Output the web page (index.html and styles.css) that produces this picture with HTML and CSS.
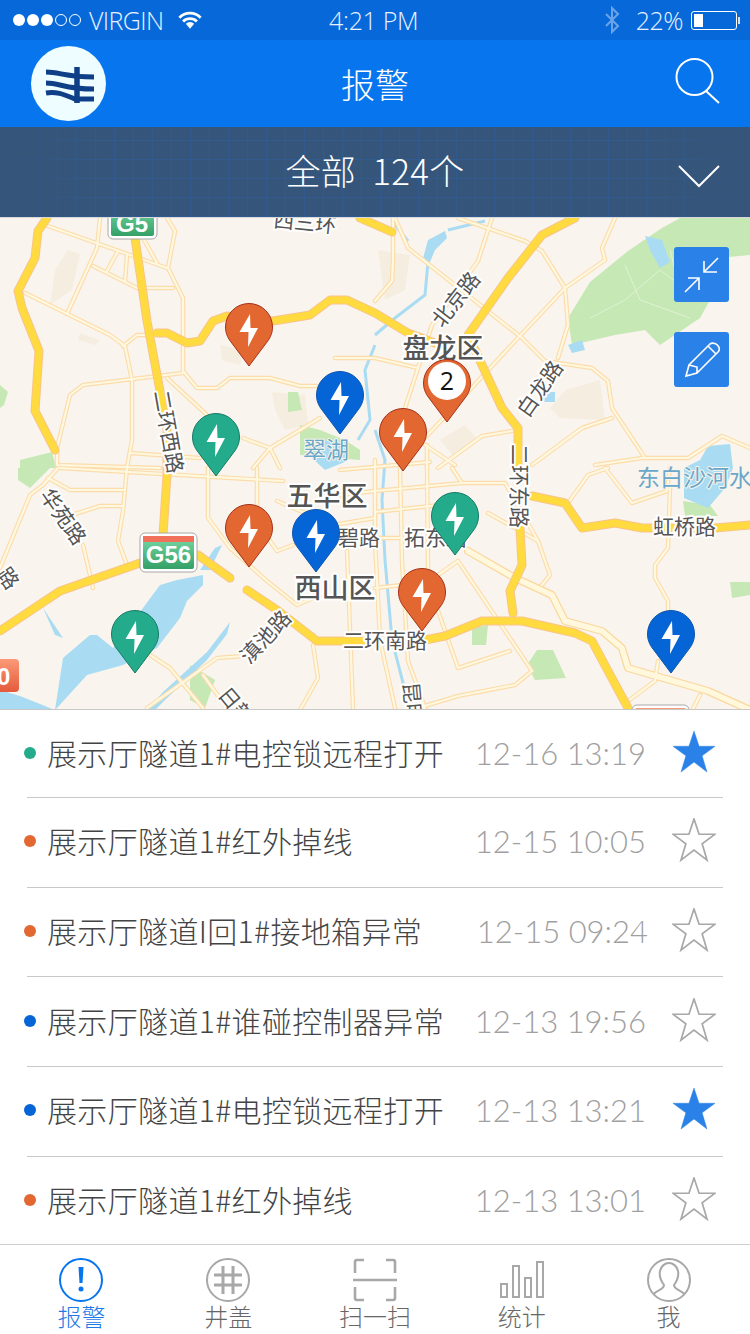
FILE: index.html
```html
<!DOCTYPE html>
<html lang="zh">
<head>
    <meta charset="UTF-8">
    <meta name="viewport" content="width=device-width, initial-scale=1.0">
    <title>报警</title>
    <link rel="stylesheet" href="styles.css">
</head>
<body>

<div class="phone">

    <!-- status bar -->
    <div class="status-bar">
        <div class="status-left">
            <span class="signal">
                <i class="dot-on"></i><i class="dot-on"></i><i class="dot-on"></i><i class="dot-off"></i><i class="dot-off"></i>
            </span>
            <span class="carrier">VIRGIN</span>
            <svg class="wifi" width="24" height="19" viewBox="0 0 26 20">
                <path d="M1.5 7 A16 16 0 0 1 24.5 7" />
                <path d="M5.5 11 A10.5 10.5 0 0 1 20.500 11" />
                <path class="wifi-tip" d="M8.500 13.500 A6.500 6.500 0 0 1 17.500 13.500 L13 19 Z" />
            </svg>
        </div>
        <div class="status-time">4:21 PM</div>
        <div class="status-right">
            <svg class="bluetooth" width="16" height="28" viewBox="0 0 16 28">
                <path d="M2 8 L14 20 L8 26 V2 L14 8 L2 20" />
            </svg>
            <span class="battery-text">22%</span>
            <span class="battery"><span class="battery-level"></span></span>
        </div>
    </div>

    <!-- nav -->
    <div class="nav-bar">
        <div class="logo">
            <svg width="50" height="38" viewBox="0 0 50 38">
                <path class="logo-wave" d="M1 6 C15 6 20 11 49 11" />
                <path class="logo-wave" d="M1 17 C15 17 20 23 49 23" />
                <path class="logo-wave" d="M1 27 C12 25 20 29 30 33 H49" />
                <path class="logo-stem" d="M32 1 V37" />
            </svg>
        </div>
        <div class="nav-title">报警</div>
        <svg class="search-icon" width="46" height="46" viewBox="0 0 46 46">
            <circle cx="19.500" cy="19" r="18" />
            <path d="M31 33 L44 45" />
        </svg>
    </div>

    <!-- filter -->
    <div class="filter-bar">
        <span class="filter-text">全部&nbsp;&nbsp;124个</span>
        <svg class="chevron" width="42" height="24" viewBox="0 0 42 24">
            <path d="M1 2 L21 22 L41 2" />
        </svg>
    </div>

    <!-- map: drawn in screen coordinates -->
    <div class="map">
        <svg class="map-canvas" width="750" height="492" viewBox="0 218 750 492">
            <defs>
                <linearGradient id="shieldGreen" x1="0" y1="0" x2="0" y2="1">
                    <stop offset="0" stop-color="#79d8a6" />
                    <stop offset="1" stop-color="#34a066" />
                </linearGradient>
                <linearGradient id="shieldRed" x1="0" y1="0" x2="0" y2="1">
                    <stop offset="0" stop-color="#fb9a78" />
                    <stop offset="1" stop-color="#e45a3c" />
                </linearGradient>

                <g id="minorRoads">
                    <path d="M48 226 L167 268" />
                    <path d="M100 218 L97 248 L67 314" />
                    <path d="M93 266 L137 288 L173 288" />
                    <path d="M118 251 L107 271" />
                    <path d="M127 255 L125 281" />
                    <path d="M143 238 L157 263" />
                    <path d="M167 218 L175 231 L168 268 L183 298 L183 371 L197 388 L217 388 L230 378 L270 378 L300 386 L317 386" />
                    <path d="M25 293 L110 335 L125 346 L132 380" />
                    <path d="M123 346 L137 335 L147 335" />
                    <path d="M57 448 L70 395 L83 385 L183 373" />
                    <path d="M132 380 L132 440 L127 468 L123 511 L118 541 L127 565" />
                    <path d="M167 378 L207 415" />
                    <path d="M243 438 L270 448 L280 468" />
                    <path d="M253 468 L270 448 L320 418" />
                    <path d="M57 450 L57 465 L160 468" />
                    <path d="M130 453 L200 458" />
                    <path d="M408 248 L522 338 L545 361 L592 368 L608 381 L612 408 L645 458" />
                    <path d="M458 218 L525 241 L542 251 L565 288 L568 325 L558 358" />
                    <path d="M395 218 L408 248" />
                    <path d="M615 218 L602 248 L605 260 L565 288 L518 338 L425 438" />
                    <path d="M492 218 L478 261 L432 325 L405 408" />
                    <path d="M393 218 L393 261 L392 281 L375 301" />
                    <path d="M335 358 L375 358 L418 368" />
                    <path d="M425 445 L455 465" />
                    <path d="M438 468 L482 436 L512 431" />
                    <path d="M532 465 L582 428 L612 418" />
                    <path d="M595 465 L642 458 L688 458 L722 436 L750 448" />
                    <path d="M452 468 L462 483 L375 491 L340 495" />
                    <path d="M462 483 L505 483 L538 541 L550 575 L542 585" />
                    <path d="M488 513 L538 541" />
                    <path d="M568 503 L588 475 L608 468" />
                    <path d="M605 468 L632 503 L667 491 L670 468" />
                    <path d="M670 488 L668 548 L655 565 L655 578 L668 601 L668 611" />
                    <path d="M658 661 L655 681 L628 701" />
                    <path d="M700 695 L692 711" />
                    <path d="M400 440 L400 468 L402 561 L408 661 L425 708" />
                    <path d="M427 445 L427 468 L428 568" />
                    <path d="M375 538 L402 538" />
                    <path d="M375 588 L402 585 L438 575 L458 561" />
                    <path d="M458 561 L532 671 L515 685 L458 696 L418 708" />
                    <path d="M438 611 L458 668 L510 651" />
                    <path d="M43 485 L30 495 L0 568" />
                    <path d="M58 468 L43 485" />
                    <path d="M48 478 L70 490 L123 490" />
                    <path d="M72 515 L100 506 L123 506" />
                    <path d="M60 468 L283 481" />
                    <path d="M208 468 L208 518 L230 548 L267 581 L297 605 L313 598" />
                    <path d="M257 468 L257 511 L270 541 L277 551 L293 545" />
                    <path d="M83 545 L93 588" />
                    <path d="M150 655 L170 668 L203 708" />
                    <path d="M147 708 L217 658 L243 656" />
                    <path d="M203 675 L227 708" />
                    <path d="M313 645 L318 678 L300 710" />
                    <path d="M347 551 L353 708" />
                    <path d="M277 501 L333 525 L375 518" />
                    <path d="M375 460 L375 540 L380 640 L395 708" />
                    <path d="M340 470 L430 462" />
                    <path d="M375 512 L440 505" />
                </g>

                <g id="majorRoad">
                    <path d="M468 551 L515 578 L552 595 L565 621 L602 631 L622 648 L628 668 L708 691 L750 710" />
                </g>

                <g id="highways">
                    <path d="M47 218 L38 231 L35 258 L18 291 L22 308 L39 351 L35 411 L55 450" />
                    <path d="M135 238 L147 321 L160 391 L167 430 L167 475 L163 535" />
                    <path d="M157 333 L167 333 L187 343 L200 341 L213 321 L227 316 L273 321 L310 315 L330 300 L347 300 L375 313 L408 333 L440 345" />
                    <path d="M575 218 L542 235 L508 278 L468 335 L482 365 L502 408 L518 428 L518 465" />
                    <path d="M360 218 L392 232" />
                    <path d="M520 528 L522 565 L510 591 L513 613" />
                    <path d="M532 496 L565 503 L582 528 L615 523 L642 528 L715 528 L750 525" />
                    <path d="M425 640 L445 636 L482 621 L522 621 L575 633 L592 641 L608 671 L628 708" />
                    <path d="M247 590 L277 610 L317 641 L363 641" />
                    <path d="M0 631 L60 591 L140 563" />
                    <path d="M198 555 L230 578" />
                </g>

                <symbol id="pin" width="48" height="64" viewBox="0 0 48 64">
                    <path d="M24 63 L6 39 C2 34 .5 29 .5 24 A23.500 23.500 0 1 1 47.500 24 C47.500 29 46 34 42 39 Z" />
                </symbol>
                <symbol id="bolt" width="48" height="64" viewBox="0 0 48 64">
                    <path class="pin-bolt" d="M25 11 L14.500 29 H23.500 L23 44 L33 25 H25.500 Z" />
                </symbol>
            </defs>

            <rect class="map-land" x="0" y="218" width="750" height="492" />

            <!-- blocks -->
            <path class="block" d="M68 250 L80 254 L72 290 L50 305 L55 270 Z" />
            <path class="block" d="M80 333 L100 340 L95 345 L78 340 Z" />
            <path class="block" d="M220 345 L245 350 L240 365 L222 360 Z" />
            <path class="block" d="M272 392 L305 395 L308 425 L285 430 L275 410 Z" />
            <path class="block" d="M378 250 L410 255 L405 290 L385 300 Z" />
            <path class="block" d="M440 440 L465 425 L478 440 L455 458 Z" />
            <path class="block" d="M566 390 L600 380 L605 420 L560 418 L550 408 Z" />

            <!-- parks -->
            <path class="park" d="M568 318 L590 282 L628 251 L662 228 L680 218 L750 218 L750 255 L718 258 L710 300 L700 318 L660 345 L645 330 L615 335 L572 345 Z" />
            <path class="park-path" d="M590 318 L625 300 L660 270 L700 300 M625 265 L640 300 L690 318 M670 250 L680 290" />
            <path class="park" d="M0 385 L8 392 L4 405 L0 408 Z" />
            <path class="park" d="M20 460 L52 452 L56 468 L20 468 Z" />
            <path class="park" d="M18 468 L50 468 L30 488 L18 480 Z" />
            <path class="park" d="M288 392 L298 392 L302 410 L288 412 Z" />
            <path class="park" d="M300 425 L320 430 L345 440 L360 450 L360 460 L300 455 Z" />
            <path class="park" d="M537 650 L553 650 L566 678 L535 680 L527 665 Z" />
            <path class="park" d="M730 582 L750 582 L750 595 L732 598 Z" />
            <path class="park" d="M472 628 L488 625 L486 645 L472 645 Z" />
            <path class="park" d="M190 665 L215 680 L205 708 L190 700 Z" />
            <path class="park" d="M160 590 L180 590 L178 603 L160 605 Z" />
            <path class="park" d="M683 501 L710 505 L718 516 L685 516 Z" />

            <!-- water -->
            <path class="water" d="M55 710 L63 658 L90 635 L97 635 L113 648 L143 608 L160 585 L177 580 L203 575 L203 585 L187 601 L180 618 L157 648 L123 665 L87 675 L57 708 Z" />
            <path class="water" d="M0 690 L20 696 L55 710 L0 710 Z" />
            <path class="water" d="M43 608 L63 638 L55 635 Z" />
            <path class="water" d="M147 710 L163 692 L207 652 L230 622 L227 634 L207 660 L165 700 L155 710 Z" />
            <path class="water" d="M200 570 L215 548 L222 545 L210 570 Z" />
            <path class="water" d="M320 440 L345 442 L345 462 L325 470 L312 458 Z" />
            <path class="water" d="M708 446 L730 444 L733 468 L725 488 L708 508 L684 498 L684 468 L700 460 Z" />
            <path class="water-line" d="M375 335 L395 318 L425 295 L428 262" />
            <path class="water-line" d="M395 225 L408 241" />
            <path class="water-line" d="M448 230 L485 221" />
            <path class="water" d="M422 262 L428 240 L445 231 L447 238 L435 250 L430 262 Z" />
            <path class="water-line" d="M375 345 L365 370 L370 420 L358 440" />
            <path class="water-line" d="M375 430 L385 460 L382 500 L385 560 L392 640 L410 710" />
            <path class="water" d="M645 236 L662 240 L670 262 L660 268 L650 250 Z" />
            <path class="water" d="M568 345 L582 340 L585 350 L572 353 Z" />
            <path class="water" d="M544 392 L555 392 L555 402 L544 402 Z" />

            <!-- roads -->
            <use href="#minorRoads" class="minor-casing" />
            <use href="#majorRoad" class="major-casing" />
            <use href="#minorRoads" class="minor-fill" />
            <use href="#majorRoad" class="major-fill" />
            <use href="#highways" class="highway-casing" />
            <use href="#highways" class="highway-fill" />

            <!-- labels -->
            <text class="label label-sm" text-anchor="middle" transform="translate(304 230) rotate(6)">西三环</text>
            <text class="label label-lg" x="443" y="358" text-anchor="middle">盘龙区</text>
            <text class="label label-sm" text-anchor="middle" transform="translate(462 304) rotate(-52)">北京路</text>
            <text class="label label-sm" text-anchor="middle" transform="translate(546 393) rotate(-55)">白龙路</text>
            <text class="label label-sm" text-anchor="middle" transform="translate(161 433) rotate(80)">二环西路</text>
            <text class="label label-water" x="326" y="458" text-anchor="middle">翠湖</text>
            <text class="label label-sm" text-anchor="middle" transform="translate(512 486) rotate(90)">二环东路</text>
            <text class="label label-water" x="637" y="486">东白沙河水</text>
            <text class="label label-lg" x="327" y="506" text-anchor="middle">五华区</text>
            <text class="label label-sm" x="338" y="545">碧路</text>
            <text class="label label-sm" x="404" y="545">拓东路</text>
            <text class="label label-sm" x="653" y="534">虹桥路</text>
            <text class="label label-sm" text-anchor="middle" transform="translate(57 521) rotate(55)">华苑路</text>
            <text class="label label-lg" x="335" y="598" text-anchor="middle">西山区</text>
            <text class="label label-sm" x="343" y="648">二环南路</text>
            <text class="label label-sm" text-anchor="middle" transform="translate(271 642) rotate(-47)">滇池路</text>
            <text class="label label-sm" transform="translate(217 695) rotate(50)">日新路</text>
            <text class="label label-sm" transform="translate(403 683) rotate(85)">昆明</text>
            <text class="label label-sm" transform="translate(-4 574) rotate(55)">路</text>

            <!-- road shields -->
            <rect class="shield-frame" x="108" y="200" width="49" height="39" rx="5" />
            <rect x="111" y="205" width="43" height="31" rx="2" fill="url(#shieldGreen)" />
            <text class="shield-text" x="132" y="232" text-anchor="middle">G5</text>

            <rect class="shield-frame" x="140" y="533" width="57" height="39" rx="5" />
            <rect x="143" y="536" width="51" height="33" rx="2" fill="url(#shieldGreen)" />
            <rect x="143" y="536" width="51" height="6" fill="#f0705a" />
            <text class="shield-text" x="168.500" y="563" text-anchor="middle">G56</text>

            <rect x="-20" y="659" width="39" height="33" rx="4" fill="url(#shieldRed)" />
            <text class="shield-text" x="-3" y="685">0</text>

            <rect class="shield-frame" x="632" y="705" width="57" height="30" rx="5" />
            <rect x="635" y="708" width="51" height="20" rx="2" fill="url(#shieldRed)" />

            <!-- pins -->
            <use href="#pin" class="pin-orange" x="225" y="303" />
            <use href="#bolt" x="225" y="303" />
            <use href="#pin" class="pin-blue" x="316" y="371" />
            <use href="#bolt" x="316" y="371" />
            <use href="#pin" class="pin-green" x="192" y="413" />
            <use href="#bolt" x="192" y="413" />
            <use href="#pin" class="pin-orange" x="379" y="408" />
            <use href="#bolt" x="379" y="408" />
            <use href="#pin" class="pin-orange" x="423" y="359" />
            <circle class="pin-count-bg" cx="447" cy="381" r="19" />
            <text class="pin-count" x="447" y="390" text-anchor="middle">2</text>
            <use href="#pin" class="pin-orange" x="225" y="504" />
            <use href="#bolt" x="225" y="504" />
            <use href="#pin" class="pin-blue" x="292" y="509" />
            <use href="#bolt" x="292" y="509" />
            <use href="#pin" class="pin-green" x="431" y="492" />
            <use href="#bolt" x="431" y="492" />
            <use href="#pin" class="pin-orange" x="398" y="568" />
            <use href="#bolt" x="398" y="568" />
            <use href="#pin" class="pin-green" x="111" y="610" />
            <use href="#bolt" x="111" y="610" />
            <use href="#pin" class="pin-blue" x="647" y="610" />
            <use href="#bolt" x="647" y="610" />
        </svg>

        <div class="map-tools">
            <button class="map-btn">
                <svg width="36" height="36" viewBox="0 0 36 36">
                    <path d="M34 1 L20 15 M20 4 V15 H33" />
                    <path d="M1 35 L15 21 M4 21 H15 V33" />
                </svg>
            </button>
            <button class="map-btn">
                <svg width="36" height="36" viewBox="0 0 36 36">
                    <path d="M2 34 L5 23 L26 2 C29 0 33 2 34.500 4.500 C36 7 35 9 34 10 L13 31 Z" />
                    <path d="M5 23 L13 25 L13 31 M24 4 L32 12" />
                </svg>
            </button>
        </div>
    </div>

    <!-- alarm list -->
    <div class="alarm-list">
        <div class="alarm-row">
            <span class="alarm-dot dot-green"></span>
            <span class="alarm-name">展示厅隧道1#电控锁远程打开</span>
            <span class="alarm-time">12-16 13:19</span>
            <svg class="star star-on" width="44" height="44" viewBox="0 0 46 46"><path d="M23 1 L28.300 17 H45 L31.500 27 L36.600 44 L23 33.500 L9.400 44 L14.500 27 L1 17 H17.700 Z" /></svg>
        </div>
        <div class="alarm-row">
            <span class="alarm-dot dot-orange"></span>
            <span class="alarm-name">展示厅隧道1#红外掉线</span>
            <span class="alarm-time">12-15 10:05</span>
            <svg class="star" width="44" height="44" viewBox="0 0 46 46"><path d="M23 1 L28.300 17 H45 L31.500 27 L36.600 44 L23 33.500 L9.400 44 L14.500 27 L1 17 H17.700 Z" /></svg>
        </div>
        <div class="alarm-row">
            <span class="alarm-dot dot-orange"></span>
            <span class="alarm-name">展示厅隧道I回1#接地箱异常</span>
            <span class="alarm-time time-shift">12-15 09:24</span>
            <svg class="star" width="44" height="44" viewBox="0 0 46 46"><path d="M23 1 L28.300 17 H45 L31.500 27 L36.600 44 L23 33.500 L9.400 44 L14.500 27 L1 17 H17.700 Z" /></svg>
        </div>
        <div class="alarm-row">
            <span class="alarm-dot dot-blue"></span>
            <span class="alarm-name">展示厅隧道1#谁碰控制器异常</span>
            <span class="alarm-time">12-13 19:56</span>
            <svg class="star" width="44" height="44" viewBox="0 0 46 46"><path d="M23 1 L28.300 17 H45 L31.500 27 L36.600 44 L23 33.500 L9.400 44 L14.500 27 L1 17 H17.700 Z" /></svg>
        </div>
        <div class="alarm-row">
            <span class="alarm-dot dot-blue"></span>
            <span class="alarm-name">展示厅隧道1#电控锁远程打开</span>
            <span class="alarm-time">12-13 13:21</span>
            <svg class="star star-on" width="44" height="44" viewBox="0 0 46 46"><path d="M23 1 L28.300 17 H45 L31.500 27 L36.600 44 L23 33.500 L9.400 44 L14.500 27 L1 17 H17.700 Z" /></svg>
        </div>
        <div class="alarm-row">
            <span class="alarm-dot dot-orange"></span>
            <span class="alarm-name">展示厅隧道1#红外掉线</span>
            <span class="alarm-time">12-13 13:01</span>
            <svg class="star" width="44" height="44" viewBox="0 0 46 46"><path d="M23 1 L28.300 17 H45 L31.500 27 L36.600 44 L23 33.500 L9.400 44 L14.500 27 L1 17 H17.700 Z" /></svg>
        </div>
    </div>

    <!-- tab bar -->
    <div class="tab-bar">
        <div class="tab tab-active">
            <svg class="tab-icon" width="46" height="46" viewBox="0 0 46 46">
                <circle cx="23" cy="23" r="21" />
                <path class="tab-solid" d="M20.500 10 H25.500 L24.500 26 H21.500 Z" />
                <circle class="tab-solid" cx="23" cy="32" r="2.500" />
            </svg>
            <span class="tab-label">报警</span>
        </div>
        <div class="tab">
            <svg class="tab-icon" width="46" height="46" viewBox="0 0 46 46">
                <circle cx="23" cy="23" r="21" />
                <path class="tab-thick" d="M18 9 V37 M28 9 V37 M9 18 H37 M9 28 H37" />
            </svg>
            <span class="tab-label">井盖</span>
        </div>
        <div class="tab">
            <svg class="tab-icon icon-scan" width="46" height="46" viewBox="0 0 46 46">
                <path d="M12 3 H5 Q3 3 3 5 V16 M34 3 H41 Q43 3 43 5 V16 M12 43 H5 Q3 43 3 41 V30 M34 43 H41 Q43 43 43 41 V30" />
                <path d="M1 23 H45" />
            </svg>
            <span class="tab-label">扫一扫</span>
        </div>
        <div class="tab">
            <svg class="tab-icon" width="46" height="46" viewBox="0 0 46 46">
                <rect x="2" y="27" width="6" height="13" />
                <rect x="14" y="9" width="6" height="31" />
                <rect x="26" y="21" width="6" height="19" />
                <rect x="38" y="5" width="6" height="35" />
            </svg>
            <span class="tab-label">统计</span>
        </div>
        <div class="tab">
            <svg class="tab-icon" width="46" height="46" viewBox="0 0 46 46">
                <circle cx="23" cy="23" r="21" />
                <path d="M8 37 C10 33 18 33 18 28 C15 24 13 19 14 14 C15 9 19 6 23 6 C27 6 31 9 32 14 C33 19 31 24 28 28 C28 33 36 33 38 37" />
            </svg>
            <span class="tab-label">我</span>
        </div>
    </div>

</div>

</body>
</html>
```

FILE: styles.css
```css
* {
    box-sizing: border-box;
}
body {
    margin: 0;
    background-color: #fff;
    font-family: "Noto Sans CJK SC", "Noto Sans", sans-serif;
}
.phone {
    width: 750px;
    height: 1334px;
    overflow: hidden;
    display: flex;
    flex-direction: column;
}

/* status bar */
.status-bar {
    height: 40px;
    flex: none;
    padding: 0 13px;
    display: flex;
    align-items: center;
    justify-content: space-between;
    background-color: #0769d9;
    color: #e8f2ff;
    font-family: "Open Sans", "Liberation Sans", sans-serif;
    font-weight: 300;
    font-size: 25px;
    position: relative;
}
.status-left,
.status-right {
    display: flex;
    align-items: center;
}
.signal {
    display: flex;
    gap: 2px;
}
.signal i {
    width: 12px;
    height: 12px;
    border-radius: 50%;
    display: block;
}
.dot-on {
    background-color: #fff;
}
.dot-off {
    border: 1px solid #fff;
}
.carrier {
    margin-left: 8px;
    width: 74px;
    letter-spacing: -0.6px;
    white-space: nowrap;
}
.wifi {
    margin-left: 15px;
    fill: none;
    stroke: #fff;
    stroke-width: 3;
}
.wifi-tip {
    fill: #fff;
    stroke: none;
}
.status-time {
    position: absolute;
    left: 329px;
    top: 3px;
    line-height: 34px;
    letter-spacing: -0.3px;
}
.bluetooth {
    fill: none;
    stroke: #6ca4e8;
    stroke-width: 2;
}
.battery-text {
    margin-left: 16px;
    letter-spacing: -0.5px;
}
.battery {
    margin-left: 8px;
    width: 46px;
    height: 19px;
    border: 1px solid #fff;
    border-radius: 3px;
    padding: 2px;
    display: block;
    position: relative;
}
.battery::after {
    content: "";
    position: absolute;
    right: -4px;
    top: 5px;
    width: 2px;
    height: 7px;
    background-color: #cfe2fb;
}
.battery-level {
    display: block;
    width: 9px;
    height: 100%;
    background-color: #fff;
}

/* nav */
.nav-bar {
    height: 87px;
    flex: none;
    padding: 0 29px 0 31px;
    display: flex;
    align-items: center;
    justify-content: space-between;
    background-color: #0775ee;
    position: relative;
}
.logo {
    width: 75px;
    height: 75px;
    border-radius: 50%;
    background-color: #eefdff;
    display: flex;
    align-items: center;
    justify-content: center;
    padding-left: 2px;
    padding-top: 2px;
}
.logo-wave {
    fill: none;
    stroke: #0e3f87;
    stroke-width: 5;
}
.logo-stem {
    fill: none;
    stroke: #0e3f87;
    stroke-width: 5.5;
}
.nav-title {
    position: absolute;
    left: 0;
    right: 0;
    text-align: center;
    color: #fff;
    font-size: 34px;
    font-weight: 300;
}
.search-icon {
    fill: none;
    stroke: #fff;
    stroke-width: 2;
    margin-top: -5px;
}

/* filter */
.filter-bar {
    height: 90px;
    flex: none;
    display: flex;
    align-items: center;
    justify-content: center;
    background-color: #35557b;
    position: relative;
    color: #fff;
    font-size: 35px;
    font-weight: 300;
    overflow: hidden;
}
.filter-bar::before {
    content: "";
    position: absolute;
    inset: 0;
    background-image:
        repeating-linear-gradient(90deg, rgba(45, 100, 175, 0.4) 0 1px, transparent 1px 19px),
        repeating-linear-gradient(0deg, rgba(45, 100, 175, 0.4) 0 1px, transparent 1px 19px);
    -webkit-mask-image: linear-gradient(90deg, transparent, #000 15%, #000 85%, transparent);
    mask-image: linear-gradient(90deg, transparent, #000 15%, #000 85%, transparent);
}
.filter-text {
    position: relative;
    top: -3px;
    letter-spacing: 0.3px;
}
.chevron {
    position: absolute;
    right: 30px;
    top: 37px;
    fill: none;
    stroke: #fff;
    stroke-width: 2;
}

/* map */
.map {
    height: 493px;
    flex: none;
    position: relative;
    overflow: hidden;
    border-top: 1px solid #d8d8d8;
    border-bottom: 1px solid #c8c8c8;
    background-color: #f9f5ee;
}
.map-canvas {
    display: block;
}
.map-land {
    fill: #f9f5ee;
}
.block {
    fill: #f5eee0;
}
.park {
    fill: #c6e8b5;
}
.park-path {
    fill: none;
    stroke: #e0f2d4;
    stroke-width: 1;
}
.water {
    fill: #a9dcf2;
}
.water-line {
    fill: none;
    stroke: #a9dcf2;
    stroke-width: 3;
}
.minor-casing,
.minor-fill,
.major-casing,
.major-fill,
.highway-casing,
.highway-fill {
    fill: none;
    stroke-linecap: round;
    stroke-linejoin: round;
}
.minor-casing {
    stroke: #fcdcab;
    stroke-width: 4.5;
}
.minor-fill {
    stroke: #fff8e0;
    stroke-width: 2.2;
}
.major-casing {
    stroke: #fbd79f;
    stroke-width: 8;
}
.major-fill {
    stroke: #fff8dc;
    stroke-width: 5.5;
}
.highway-casing {
    stroke: #f8c48c;
    stroke-width: 9;
}
.highway-fill {
    stroke: #ffdb3f;
    stroke-width: 7;
}
.label {
    fill: #555;
    stroke: #fff;
    stroke-width: 4px;
    stroke-linejoin: round;
    paint-order: stroke;
    font-family: "Noto Sans CJK SC", sans-serif;
}
.label-lg {
    font-size: 27px;
    font-weight: 500;
}
.label-sm {
    font-size: 21px;
}
.label-water {
    fill: #6ba7c8;
    stroke: #f9f5ee;
    stroke-width: 2px;
    font-size: 23px;
}
.shield-frame {
    fill: #fff;
    stroke: #a8a8a8;
    stroke-width: 1;
}
.shield-text {
    fill: #fff;
    font-family: "Liberation Sans", sans-serif;
    font-size: 24px;
    font-weight: 700;
}
.pin-orange {
    fill: #e36730;
    stroke: #a5301a;
}
.pin-blue {
    fill: #0665d6;
    stroke: #0d55ad;
}
.pin-green {
    fill: #23ab8c;
    stroke: #177a66;
}
.pin-bolt {
    fill: #fff;
    stroke: none;
}
.pin-count-bg {
    fill: #fff;
}
.pin-count {
    fill: #111;
    font-family: "Open Sans", sans-serif;
    font-size: 25px;
}
.map-tools {
    position: absolute;
    top: 29px;
    right: 21px;
    display: flex;
    flex-direction: column;
    gap: 30px;
}
.map-btn {
    width: 55px;
    height: 55px;
    padding: 0;
    border: none;
    border-radius: 3px;
    background-color: #2a82e8;
    display: flex;
    align-items: center;
    justify-content: center;
}
.map-btn svg {
    fill: none;
    stroke: #fff;
    stroke-width: 1.6;
}

/* list */
.alarm-list {
    flex: 1;
    min-height: 0;
}
.alarm-row {
    height: 89.67px;
    margin: 0 27px;
    padding-right: 7px;
    display: flex;
    align-items: center;
    position: relative;
    border-bottom: 1px solid #c9c9c9;
}
.alarm-row:first-child {
    height: 88px;
}
.alarm-row:last-child {
    border-bottom: none;
}
.alarm-dot {
    position: absolute;
    left: -3px;
    top: 50%;
    margin-top: -7px;
    width: 12px;
    height: 12px;
    border-radius: 50%;
}
.dot-green {
    background-color: #23ab8c;
}
.dot-orange {
    background-color: #e36730;
}
.dot-blue {
    background-color: #0665d6;
}
.alarm-name {
    margin-left: 20px;
    font-size: 30px;
    font-weight: 300;
    color: #444;
    white-space: nowrap;
    letter-spacing: 0.35px;
    margin-top: -4px;
}
.alarm-time {
    margin-left: auto;
    font-family: Lato, "Liberation Sans", sans-serif;
    font-weight: 300;
    font-size: 31px;
    color: #a0a0a0;
    margin-top: -2px;
}
.time-shift {
    margin-right: -2px;
}
.star {
    margin-left: 26px;
    margin-top: -4px;
    flex: none;
    fill: none;
    stroke: #a8a8a8;
    stroke-width: 1.8;
}
.star-on {
    fill: #2a82e8;
    stroke: #2a82e8;
    stroke-width: 0.5;
}

/* tab bar */
.tab-bar {
    height: 90px;
    flex: none;
    padding: 12px 8px 0;
    border-top: 1px solid #cfcfcf;
    display: flex;
    background-color: #fff;
}
.tab {
    flex: 1;
    display: flex;
    flex-direction: column;
    align-items: center;
    color: #666;
    font-weight: 300;
}
.tab-icon {
    fill: none;
    stroke: #a8a8a8;
    stroke-width: 2;
    flex: none;
}
.icon-scan {
    stroke-width: 2.6;
}
.tab-thick {
    stroke-width: 3;
}
.tab-label {
    font-size: 24px;
    line-height: 30px;
    margin-top: -2px;
}
.tab-active {
    color: #1e7be6;
}
.tab-active .tab-icon {
    stroke: #0775ee;
}
.tab-solid {
    fill: #0775ee;
    stroke: none;
}
```
